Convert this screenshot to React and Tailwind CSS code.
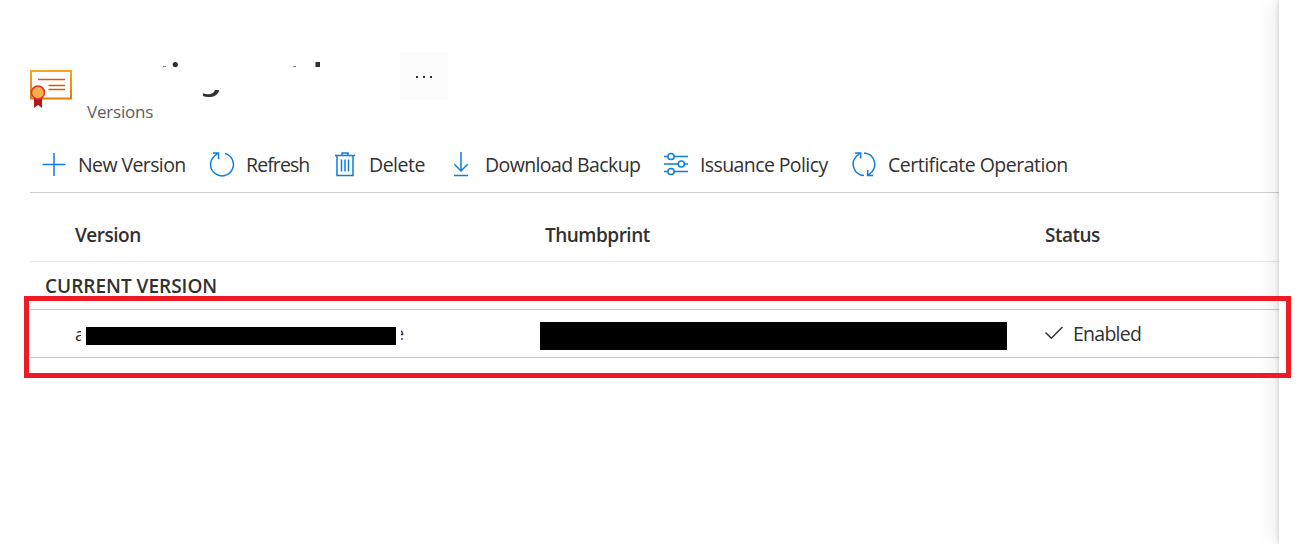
const commands = [
  { label: 'New Version', icon: 'plus', box: 'w-[168px]', gap: 'pl-[12px]', text: 'tracking-[-0.6px]' },
  { label: 'Refresh', icon: 'refresh', box: 'w-[123px]', gap: 'pl-[12px]', text: 'tracking-[-0.9px]' },
  { label: 'Delete', icon: 'trash', box: 'w-[116px]', gap: 'pl-[12px]', text: 'tracking-[-0.5px]' },
  { label: 'Download Backup', icon: 'download', box: 'w-[215px]', gap: 'pl-[12px]', text: 'tracking-[-0.6px]' },
  { label: 'Issuance Policy', icon: 'sliders', box: 'w-[188px]', gap: 'pl-[12px]', text: 'tracking-[-0.6px]' },
  { label: 'Certificate Operation', icon: 'sync', box: 'w-[240px]', gap: 'pl-[12px]', text: 'tracking-[-0.5px]' },
];

const shapes = {
  plus: <path d="M12 1v23M.5 12.500h23" />,
  refresh: <path d="M15 1.500A11.400 11.400 0 1 1 4.200 4.200L8 1M3 1h5.500v6" />,
  trash: <path d="M2 3.500h20M9 3.500V1h6v2.500M4 3.500v20h16v-20M8.500 7.500v12M12 7.500v12M15.500 7.500v12" />,
  download: <path d="M12 0v19M5.300 12.300 12 19l6.700-6.700M5 23.500h14" />,
  sliders: (
    <>
      <path d="M0 4.500h3.700M10 4.500h14M0 12h14M20.500 12H24M0 19.500h3.700M10 19.500h14" />
      <circle cx="7" cy="4.500" r="3.100" />
      <circle cx="17.300" cy="12" r="3.100" />
      <circle cx="7" cy="19.500" r="3.100" />
    </>
  ),
  sync: <path d="M12 23.600A11.400 11.400 0 0 1 4.200 4.500L8.300 1M3 1h5.700v5.500M12 1A11.400 11.400 0 0 1 19.800 20L15.700 23.500M21 23.500h-5.300V18" />,
};

function CommandIcon({ name }) {
  return (
    <svg className="mb-[2px] h-[25px] w-6 shrink-0 overflow-visible" viewBox="0 0 24 25" fill="none" stroke="#0f7edb" strokeWidth="1.500">
      {shapes[name]}
    </svg>
  );
}

function CertificateIcon() {
  return (
    <svg className="h-[40px] w-[43px]" viewBox="0 0 43 40">
      <defs>
        <linearGradient id="frame" x1="0" y1="0" x2="0" y2="1">
          <stop offset="0" stopColor="#faa21d" />
          <stop offset="1" stopColor="#e57c0b" />
        </linearGradient>
      </defs>
      <rect x="1" y="2" width="40" height="27.500" fill="#fff" stroke="url(#frame)" strokeWidth="2" />
      <path d="M8 10.500h27M18.500 16.500H35M18.500 20.500H35" stroke="#d45b09" strokeWidth="1.500" />
      <path d="M4 28h8v11l-4-3-4 3z" fill="#b3161b" />
      <circle cx="8" cy="23.500" r="6.500" fill="#ffb04d" stroke="#e0302b" strokeWidth="1.500" />
    </svg>
  );
}

function MaskedTitle() {
  return (
    <svg className="h-[40px] w-[170px]" viewBox="160 60 170 40" fill="#323130">
      <rect x="163" y="66" width="3" height="1" opacity=".6" />
      <circle cx="175.300" cy="64.600" r="2.600" />
      <rect x="293" y="66" width="3" height="1" opacity=".6" />
      <rect x="315.500" y="62" width="4.500" height="5" />
      <path d="M203 93.200v2.700c5 2 14.500 2 16.200-5.900h-4.200c-1.500 4.500-7 5-12 3.200z" />
    </svg>
  );
}

export default function App() {
  return (
    <div className="relative flex h-[544px] w-full overflow-hidden bg-white font-['Open_Sans','Noto_Sans',sans-serif] text-[#323130]">
      <main className="flex w-[1279px] shrink-0 flex-col pl-[30px]">
        <header className="flex h-[138px] shrink-0">
          <div className="pt-[69px]"><CertificateIcon /></div>
          <div className="flex w-[327px] flex-col pl-[14px] pt-[60px]">
            <div className="h-[40px] pl-[73px]"><MaskedTitle /></div>
            <p className="text-[17px] leading-6 tracking-[-0.2px] text-[#605e5c]">Versions</p>
          </div>
          <button aria-label="More" className="mt-[52px] flex h-12 w-12 items-center justify-center gap-[5px] bg-[#fcfcfc] pt-[2px]">
            <span className="h-[2px] w-[2px] bg-[#323130]" />
            <span className="h-[2px] w-[2px] bg-[#323130]" />
            <span className="h-[2px] w-[2px] bg-[#323130]" />
          </button>
        </header>
        <nav className="flex h-[55px] shrink-0 items-center border-b border-[#d2d0ce] pl-3">
          {commands.map((c) => (
            <button key={c.label} className={`flex h-full shrink-0 items-center whitespace-nowrap text-left ${c.box}`}>
              <CommandIcon name={c.icon} />
              <span className={`text-[19.500px] ${c.gap} ${c.text}`}>{c.label}</span>
            </button>
          ))}
        </nav>
        <div className="flex h-[69px] shrink-0 items-center border-b border-[#e8e8e8] pl-[45px] pt-4 text-[19px] font-semibold tracking-[-0.5px]">
          <span className="w-[470px]">Version</span>
          <span className="w-[500px]">Thumbprint</span>
          <span>Status</span>
        </div>
        <h2 className="h-[48px] shrink-0 border-b border-[#c8c8c8] pl-[15px] text-[19px] font-semibold leading-[48px]">CURRENT VERSION</h2>
        <div className="flex h-[48px] shrink-0 items-center border-b border-[#c8c8c8] pl-[45px]">
          <span className="mt-px w-[6px] overflow-hidden text-[18px]">a</span>
          <span className="ml-[5px] mt-[4px] h-[18px] w-[310px] bg-black" />
          <span className="ml-[5px] flex w-[3px] justify-end overflow-hidden text-[18px]">e</span>
          <span className="ml-[136px] mt-[4px] h-[28px] w-[467px] bg-black" />
          <svg className="mb-[2px] ml-[38px] h-[14px] w-[18px]" viewBox="0 0 18 14" fill="none" stroke="#323130" strokeWidth="1.500">
            <path d="M.5 6.500 6.300 12.300 17.500 1" />
          </svg>
          <span className="ml-[10px] text-[19.500px] tracking-[-0.75px]">Enabled</span>
        </div>
      </main>
      <aside className="h-full flex-1 bg-white shadow-[0_0_5px_rgba(0,0,0,0.18),0_0_24px_rgba(0,0,0,0.12)]" />
      <div className="pointer-events-none absolute left-[24px] top-[296px] h-[82px] w-[1267px] border-[5px] border-[#ed1c24]" />
    </div>
  );
}
